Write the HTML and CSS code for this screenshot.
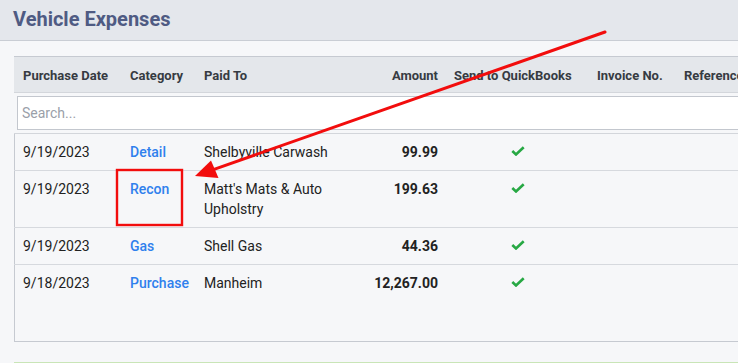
FILE: index.html
```html
<!DOCTYPE html>
<html>
<head>
<meta charset="utf-8">
<link rel="stylesheet" href="styles.css">
</head>
<body>
<div class="page">
  <header class="topbar">
    <h1 class="title">Vehicle Expenses</h1>
  </header>
  <main class="content">
    <div class="grid-box">
      <table class="grid">
        <colgroup>
          <col class="c-date"><col class="c-cat"><col class="c-paid"><col class="c-amt"><col class="c-qb"><col class="c-inv"><col class="c-ref">
        </colgroup>
        <thead>
          <tr class="head-row">
            <th>Purchase Date</th>
            <th>Category</th>
            <th>Paid To</th>
            <th class="num">Amount</th>
            <th>Send to QuickBooks</th>
            <th>Invoice No.</th>
            <th>Reference</th>
          </tr>
          <tr class="search-row">
            <td colspan="7"><input class="search" type="text" placeholder="Search..."></td>
          </tr>
        </thead>
        <tbody>
          <tr>
            <td>9/19/2023</td>
            <td><a class="link" href="#">Detail</a></td>
            <td>Shelbyville Carwash</td>
            <td class="num amt">99.99</td>
            <td class="ctr"><svg class="check" viewBox="0 0 14 10" width="14" height="10"><polyline points="1.3,5 5,8.5 12.7,1.2" fill="none" stroke="#27a844" stroke-width="2.6"/></svg></td>
            <td></td>
            <td></td>
          </tr>
          <tr>
            <td>9/19/2023</td>
            <td><a class="link" href="#">Recon</a></td>
            <td>Matt's Mats &amp; Auto Upholstry</td>
            <td class="num amt">199.63</td>
            <td class="ctr"><svg class="check" viewBox="0 0 14 10" width="14" height="10"><polyline points="1.3,5 5,8.5 12.7,1.2" fill="none" stroke="#27a844" stroke-width="2.6"/></svg></td>
            <td></td>
            <td></td>
          </tr>
          <tr>
            <td>9/19/2023</td>
            <td><a class="link" href="#">Gas</a></td>
            <td>Shell Gas</td>
            <td class="num amt">44.36</td>
            <td class="ctr"><svg class="check" viewBox="0 0 14 10" width="14" height="10"><polyline points="1.3,5 5,8.5 12.7,1.2" fill="none" stroke="#27a844" stroke-width="2.6"/></svg></td>
            <td></td>
            <td></td>
          </tr>
          <tr class="last">
            <td>9/18/2023</td>
            <td><a class="link" href="#">Purchase</a></td>
            <td>Manheim</td>
            <td class="num amt">12,267.00</td>
            <td class="ctr"><svg class="check" viewBox="0 0 14 10" width="14" height="10"><polyline points="1.3,5 5,8.5 12.7,1.2" fill="none" stroke="#27a844" stroke-width="2.6"/></svg></td>
            <td></td>
            <td></td>
          </tr>
        </tbody>
      </table>
    </div>
    <div class="next-box"></div>
  </main>
  <svg class="annot" width="738" height="363" viewBox="0 0 738 363">
    <rect x="117" y="170" width="65" height="55" fill="none" stroke="#f20d0d" stroke-width="2.4"/>
    <line x1="605" y1="32" x2="214" y2="169.3" stroke="#f20d0d" stroke-width="3" stroke-linecap="round"/>
    <polygon points="195,176 211,160.5 218.5,178" fill="#f20d0d"/>
  </svg>
</div>
</body>
</html>
```
FILE: styles.css
```css
* { box-sizing: border-box; }
html, body { margin: 0; padding: 0; }
body {
  font-family: Roboto, "Liberation Sans", sans-serif;
  background: #f6f7f9;
  color: #222;
  width: 738px;
  height: 363px;
  overflow: hidden;
}
.page {
  position: relative;
  width: 738px;
  height: 363px;
  overflow: hidden;
}
.topbar {
  height: 41px;
  background: #e4e7ec;
  border-bottom: 1px solid #c9cdd4;
  padding-left: 13px;
  display: flex;
  align-items: center;
}
.title {
  margin: 0;
  font-size: 20px;
  font-weight: 700;
  color: #4f5b83;
  line-height: 24px;
  margin-top: -2px;
}
.content {
  padding: 15px 0 0 14px;
  background: #f6f7f9;
}
.grid-box {
  width: 800px;
  height: 286px;
  border: 1px solid #c6cad1;
  border-right: none;
  background: #f6f7f9;
}
.grid {
  table-layout: fixed;
  border-collapse: collapse;
  width: 799px;
  font-size: 14px;
  line-height: 20px;
  margin-left: -1px;
}
.c-date { width: 108px; }
.c-cat { width: 74px; }
.c-paid { width: 150px; }
.c-amt { width: 100px; }
.c-qb { width: 143px; }
.c-inv { width: 87px; }
.c-ref { width: 137px; }
.head-row th {
  background: #e4e7eb;
  color: #363b42;
  font-size: 13px;
  font-weight: 700;
  text-align: left;
  padding: 9px 8px 7px 8px;
  line-height: 19px;
  white-space: nowrap;
  overflow: hidden;
  border-bottom: 1px solid #d3d6db;
}
.head-row th:first-child { padding-left: 9px; }
.head-row th.num { text-align: right; }
.search-row td {
  padding: 3px 0 3px 3px;
  border-bottom: 1px solid #d3d6db;
  background: #f6f7f9;
}
.search {
  display: block;
  width: 790px;
  height: 34px;
  border: 1px solid #c3c7ce;
  background: #fff;
  font-family: Roboto, "Liberation Sans", sans-serif;
  font-size: 14px;
  padding: 0 4px;
  outline: none;
  color: #222;
}
.search::placeholder { color: #9aa0a9; }
tbody td {
  padding: 8px 8px;
  vertical-align: top;
  border-bottom: 1px solid #d6d9de;
  color: #222;
}
tbody td:first-child { padding-left: 9px; }
tbody tr.last td { border-bottom: none; }
td.num { text-align: right; }
td.amt { font-weight: 700; }
td.ctr { text-align: center; }
.link {
  color: #2f80ed;
  text-decoration: none;
  font-weight: 500;
}
.check {
  display: inline-block;
  vertical-align: top;
  margin-top: 4px;
}
.next-box {
  margin-top: 20px;
  height: 10px;
  border-top: 1px solid #c9e5b7;
  background: #f6f7f9;
}
.annot {
  position: absolute;
  left: 0;
  top: 0;
  pointer-events: none;
}
```
